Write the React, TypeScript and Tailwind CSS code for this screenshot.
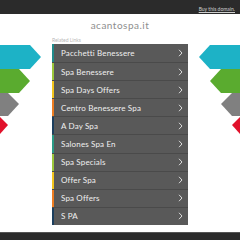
const links = [
  { label: "Pacchetti Benessere", stripe: "bg-[#1f8a8a]" },
  { label: "Spa Benessere", stripe: "bg-[#9cc73a]" },
  { label: "Spa Days Offers", stripe: "bg-[#f2c51d]" },
  { label: "Centro Benessere Spa", stripe: "bg-[#ee7d22]" },
  { label: "A Day Spa", stripe: "bg-[#1c3f5e]" },
  { label: "Salones Spa En", stripe: "bg-[#2a9a85]" },
  { label: "Spa Specials", stripe: "bg-[#9cc73a]" },
  { label: "Offer Spa", stripe: "bg-[#f2c51d]" },
  { label: "Spa Offers", stripe: "bg-[#ee7d22]" },
  { label: "S PA", stripe: "bg-[#1c3f5e]" },
];

function SideArrows() {
  // decorative chevron banners on both edges
  return (
    <svg className="absolute left-0 top-0 pointer-events-none" width="240" height="240" viewBox="0 0 240 240">
      <polygon points="0,45 30,45 41,57 30,69 0,69" fill="#1db2c6" />
      <polygon points="0,69 19,69 30,81 19,93 0,93" fill="#5aab2f" />
      <polygon points="0,93 8,93 19,104 8,116 0,116" fill="#808080" />
      <polygon points="0,117 0,117 8,125 0,134" fill="#e1112b" />
      <polygon points="240,45 210,45 199,57 210,69 240,69" fill="#1db2c6" />
      <polygon points="240,69 221,69 210,81 221,93 240,93" fill="#5aab2f" />
      <polygon points="240,93 232,93 221,104 232,116 240,116" fill="#808080" />
      <polygon points="240,117 240,117 232,125 240,134" fill="#e1112b" />
    </svg>
  );
}

function Chevron() {
  return (
    <svg width="5" height="8" viewBox="0 0 5 8" className="mr-[5px]">
      <polyline points="1,0.8 4,4 1,7.2" fill="none" stroke="#dcdcdc" strokeWidth="1" />
    </svg>
  );
}

export default function App() {
  return (
    <main className="relative w-[240px] h-[240px] overflow-hidden bg-white font-['Lato',sans-serif]">
      <SideArrows />
      <header className="h-[14px] bg-[#2b2b2b] flex items-end justify-end pr-[5px] pb-[2px]">
        <span className="text-[5px] leading-none text-[#cfcfcf] underline">Buy this domain.</span>
      </header>

      <div className="relative flex flex-col items-center">
        <h1 className="mt-[5px] text-[10px] leading-[12px] text-[#8e8e8e] tracking-[0.5px]">acantospa.it</h1>
        <div className="w-[136px] mt-[6px]">
          <span className="block text-[5px] leading-[6px] text-[#b8b8b8]">Related Links</span>
          <ul className="mt-[1px] bg-[#595959]">
            {links.map((l, i) => (
              <li
                key={l.label}
                className={`flex items-center h-[18.1px] ${i > 0 ? "border-t border-[#4a4a4a]" : ""}`}
              >
                <span className={`w-[2px] self-stretch ${l.stripe}`} />
                <span className="flex-1 pl-[7px] text-[8px] leading-none tracking-[0.15px] text-[#f0f0f0]">{l.label}</span>
                <Chevron />
              </li>
            ))}
          </ul>
        </div>
      </div>

      <footer className="absolute left-0 right-0 bottom-0 h-[8px] bg-[#2b2b2b] border-t border-[#555]" />
    </main>
  );
}
